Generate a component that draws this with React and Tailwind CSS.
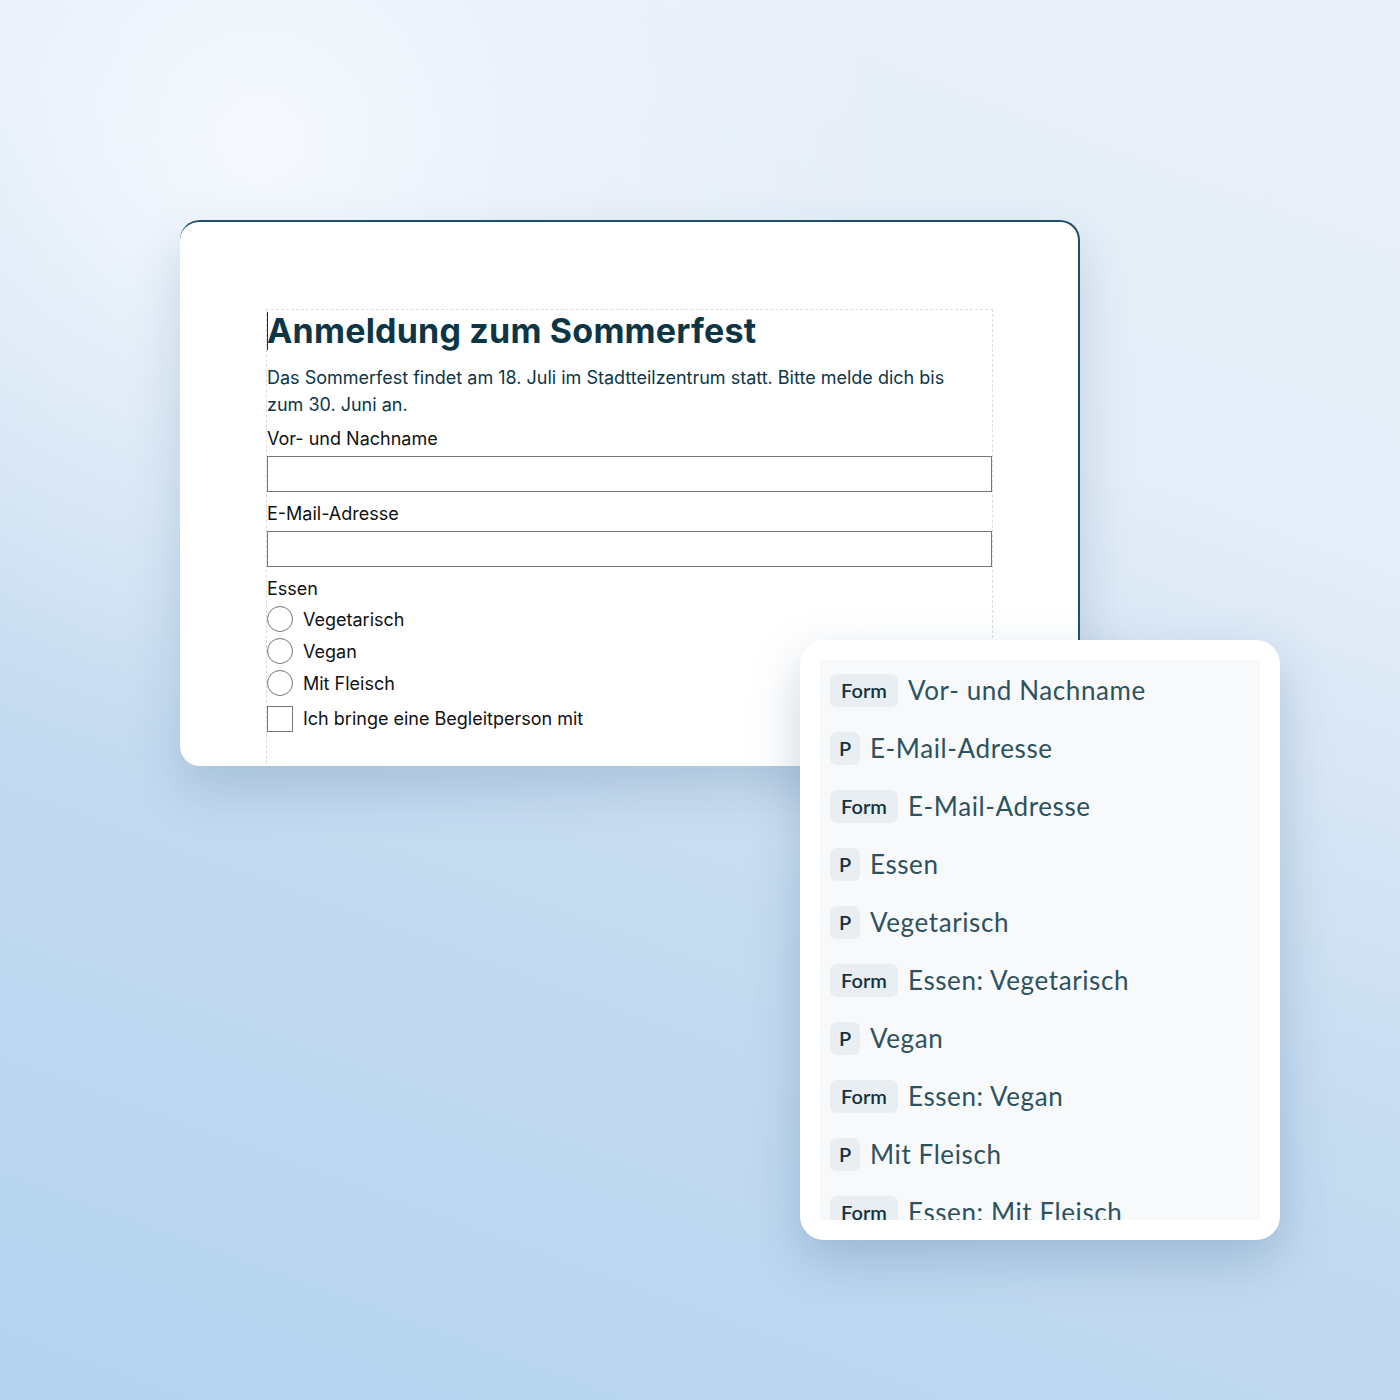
import React from 'react';

const rows = [
  { tag: 'Form', text: 'Vor- und Nachname' },
  { tag: 'P', text: 'E-Mail-Adresse' },
  { tag: 'Form', text: 'E-Mail-Adresse' },
  { tag: 'P', text: 'Essen' },
  { tag: 'P', text: 'Vegetarisch' },
  { tag: 'Form', text: 'Essen: Vegetarisch' },
  { tag: 'P', text: 'Vegan' },
  { tag: 'Form', text: 'Essen: Vegan' },
  { tag: 'P', text: 'Mit Fleisch' },
  { tag: 'Form', text: 'Essen: Mit Fleisch' }
];

const options = ['Vegetarisch', 'Vegan', 'Mit Fleisch'];

const App = () => {
  return (
    <div className="relative w-[1400px] h-[1400px] overflow-hidden bg-[linear-gradient(20deg,#b3d3f0_0%,#c6dcf1_40%,#e4edf8_70%,#e9f0f8_100%)]">
      {/* soft highlight top left */}
      <div className="absolute inset-0 bg-[radial-gradient(circle_at_260px_140px,rgba(246,250,255,0.95)_0px,rgba(240,246,252,0.5)_260px,rgba(240,246,252,0)_620px)]" />

      {/* form preview card */}
      <div className="absolute left-[180px] top-[220px] w-[900px] h-[546px] bg-white rounded-[20px] border-t-2 border-r-2 border-[#1d5068] overflow-hidden shadow-[0_24px_50px_rgba(60,100,140,0.22)] font-['Inter',sans-serif]">
        <div className="ml-[86px] mt-[87px] w-[727px] h-[600px] border border-dashed border-[#dcdcdc] border-b-0">
          <h1 className="relative text-[34px] leading-[40px] font-bold text-[#0c3646] tracking-[0.2px] pt-[1px]">
            <span className="absolute left-0 top-[2px] w-[1px] h-[38px] bg-[#0c3646]" />
            Anmeldung zum Sommerfest
          </h1>
          <p className="mt-[13px] text-[18px] leading-[27px] text-[#0c3646] pr-[40px]">
            Das Sommerfest findet am 18. Juli im Stadtteilzentrum statt. Bitte melde dich bis<br />zum 30. Juni an.
          </p>
          <div className="mt-[10px] text-[18px] leading-[22px] text-[#111]">Vor- und Nachname</div>
          <div className="mt-[6px] h-[36px] w-full border border-[#767676]" />
          <div className="mt-[11px] text-[18px] leading-[22px] text-[#111]">E-Mail-Adresse</div>
          <div className="mt-[6px] h-[36px] w-full border border-[#767676]" />
          <div className="mt-[11px] text-[18px] leading-[22px] text-[#111]">Essen</div>
          <div className="mt-[3px] flex flex-col">
            {options.map((o) => (
              <div key={o} className="flex items-center gap-[10px] h-[32px]">
                <span className="w-[26px] h-[26px] rounded-full border border-[#767676]" />
                <span className="text-[18px] text-[#111]">{o}</span>
              </div>
            ))}
          </div>
          <div className="mt-[6px] flex items-center gap-[10px]">
            <span className="w-[26px] h-[26px] border border-[#767676]" />
            <span className="text-[18px] text-[#111]">Ich bringe eine Begleitperson mit</span>
          </div>
        </div>
      </div>

      {/* outline popover */}
      <div className="absolute left-[800px] top-[640px] w-[480px] h-[600px] bg-white rounded-[24px] p-[20px] shadow-[0_20px_50px_rgba(60,100,140,0.28)] font-['Lato',sans-serif]">
        <div className="h-[560px] bg-[#f7f9fb] overflow-hidden pt-[1px] pl-[10px]">
          {rows.map((r, i) => (
            <div key={i} className="h-[58px] flex items-center gap-[10px]">
              <span className={`h-[33px] flex items-center justify-center rounded-[7px] bg-[#e8eef2] text-[20px] font-semibold text-[#15323c] ${r.tag === 'P' ? 'w-[30px]' : 'w-[68px]'}`}>
                {r.tag}
              </span>
              <span className="text-[26px] text-[#2d525d] tracking-[0.6px]">{r.text}</span>
            </div>
          ))}
        </div>
      </div>
    </div>
  );
};

export default App;
